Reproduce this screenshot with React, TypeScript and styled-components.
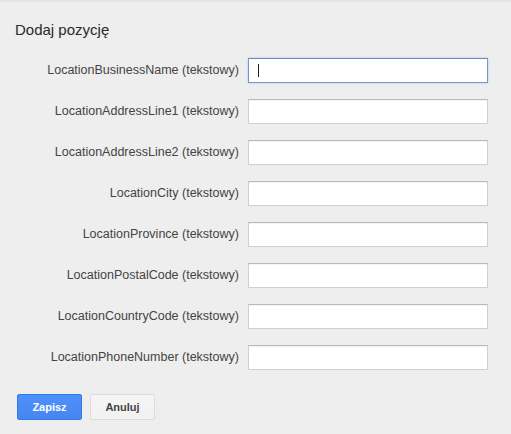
import styled, {createGlobalStyle} from "styled-components";

const GlobalStyle = createGlobalStyle`
  html, body {
    margin: 0;
    padding: 0;
    background: #eeeeee;
  }
  body {
    font-family: Arial, "Liberation Sans", sans-serif;
  }
`

const Page = styled.div`
  width: 511px;
  height: 434px;
  box-sizing: border-box;
  background: #eeeeee;
  border-top: 2px solid #e4e4e4;
  padding: 18px 0 0 15px;
`

const Title = styled.h2`
  margin: 0 0 18px 0;
  font-size: 15px;
  font-weight: normal;
  color: #2a2a2a;
  line-height: 20px;
`

const Form = styled.div`
  display: flex;
  flex-direction: column;
  gap: 16px;
`

const Row = styled.div`
  display: grid;
  grid-template-columns: 224px 240px;
  column-gap: 9px;
  align-items: center;
  height: 25px;
`

const Label = styled.label`
  text-align: right;
  font-size: 12.5px;
  color: #444;
  white-space: nowrap;
  margin-top: -2px;
`

const Input = styled.input<{ $focused?: boolean }>`
  box-sizing: border-box;
  width: 240px;
  height: 25px;
  margin: 0;
  padding: 0 8px;
  background: #fff;
  border: 1px solid ${p => p.$focused ? "#7d94c8" : "#d0d0d0"};
  border-top-color: ${p => p.$focused ? "#6d86bd" : "#b9b9b9"};
  box-shadow: ${p => p.$focused ? "0 0 2px rgba(77,144,254,0.4)" : "inset 0 1px 1px rgba(0,0,0,0.05)"};
  font-family: Arial, "Liberation Sans", sans-serif;
  font-size: 13px;
  outline: none;
`

const Caret = styled.span`
  position: absolute;
  left: 10px;
  top: 6px;
  width: 1px;
  height: 13px;
  background: #222;
`

const FieldWrap = styled.div`
  position: relative;
  width: 240px;
  height: 25px;
`

const Buttons = styled.div`
  display: flex;
  gap: 8px;
  margin: 24px 0 0 2px;
`

const Button = styled.button<{ $primary?: boolean }>`
  box-sizing: border-box;
  width: 65px;
  height: 26px;
  border-radius: 2px;
  font-family: Arial, "Liberation Sans", sans-serif;
  font-size: 11px;
  font-weight: bold;
  padding: 0;
  cursor: pointer;
  color: ${p => p.$primary ? "#fff" : "#444"};
  background: ${p => p.$primary
    ? "linear-gradient(#4d90fe, #4787ed)"
    : "linear-gradient(#f5f5f5, #f1f1f1)"};
  border: 1px solid ${p => p.$primary ? "#3079ed" : "#dcdcdc"};
`

const fields = [
  "LocationBusinessName",
  "LocationAddressLine1",
  "LocationAddressLine2",
  "LocationCity",
  "LocationProvince",
  "LocationPostalCode",
  "LocationCountryCode",
  "LocationPhoneNumber",
];

export default function App() {
  return (
    <>
      <GlobalStyle/>
      <Page>
        <Title>Dodaj pozycję</Title>
        <Form>
          {fields.map((f, i) => (
            <Row key={f}>
              <Label htmlFor={f}>{f} (tekstowy)</Label>
              <FieldWrap>
                <Input id={f} type="text" $focused={i === 0}/>
                {i === 0 && <Caret/>}
              </FieldWrap>
            </Row>
          ))}
        </Form>
        <Buttons>
          <Button $primary>Zapisz</Button>
          <Button>Anuluj</Button>
        </Buttons>
      </Page>
    </>
  );
}
